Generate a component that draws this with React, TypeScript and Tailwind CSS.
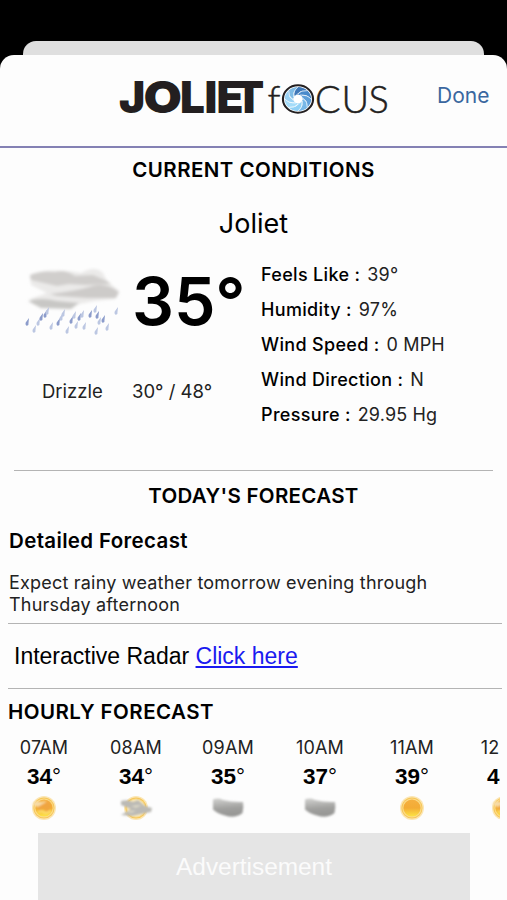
import React from 'react';

const conditions = [
  { label: 'Feels Like :', value: '39°' },
  { label: 'Humidity :', value: '97%' },
  { label: 'Wind Speed :', value: '0 MPH' },
  { label: 'Wind Direction :', value: 'N' },
  { label: 'Pressure :', value: '29.95 Hg' },
];

const hours = [
  { time: '07AM', temp: '34', icon: 'hazy' },
  { time: '08AM', temp: '34', icon: 'partly' },
  { time: '09AM', temp: '35', icon: 'cloudy' },
  { time: '10AM', temp: '37', icon: 'cloudy' },
  { time: '11AM', temp: '39', icon: 'sunny' },
  { time: '12PM', temp: '42', icon: 'hazy' },
];

// shutter blades, clockwise from the top
const blades = ['#3f78b8', '#4a8acb', '#5f9fd9', '#78b8e8', '#8fd0f5', '#a4dcf9', '#9ad2f4', '#7fbce6'];

function Logo() {
  return (
    <svg width="274" height="68" viewBox="0 -12 274 68" fill="#231f20">
      <g fontSize="44" fontWeight="900" fontFamily="Inter, sans-serif">
        <text x="1" y="36.5">J</text>
        <text x="25.5" y="36.5" textLength="38.5" lengthAdjust="spacingAndGlyphs">O</text>
        <text x="62 86.5 98.5 116" y="36.5">LIET</text>
      </g>
      <g fontFamily="Lato, sans-serif" fontWeight="300" stroke="#231f20" strokeWidth="0.5">
        <text x="149.5" y="36.5" fontSize="38">f</text>
        <text x="197 223.5 250.5" y="36.5" fontSize="38">CUS</text>
      </g>
      <g transform="translate(180 23) scale(1.1 1)">
        <circle r="13.7" fill="#fff" stroke="#231f20" strokeWidth="1.9" />
        {blades.map((color, i) => (
          <path key={color} d="M0 -4.2 Q2 -9 8.2 -8.8 A12 12 0 0 1 12 0 Q7 -6 3 -3 Z" fill={color} transform={`rotate(${i * 45 - 45})`} />
        ))}
        {blades.map((color, i) => (
          <path key={color} d="M-1.5 -4.2 Q3 -9 8.6 -8.4" fill="none" stroke="#fff" strokeWidth="0.6" transform={`rotate(${i * 45 - 45})`} />
        ))}
        <circle r="4.2" fill="#fff" />
      </g>
    </svg>
  );
}

function DrizzleIcon() {
  const drops = [[4, 56], [11, 63], [15, 56], [22, 48], [24, 45], [28, 60], [35, 56], [38, 51], [44, 64], [48, 54], [51, 49], [53, 59], [56, 51], [61, 60], [59, 48], [67, 48], [72, 43], [76, 55], [74, 49], [73, 65], [84, 61], [80, 53], [93, 45], [40, 47], [18, 51]];
  return (
    <svg width="102" height="78" viewBox="0 0 102 78">
      <defs>
        <filter id="soft" x="-20%" y="-20%" width="140%" height="140%"><feGaussianBlur stdDeviation="1.5" /></filter>
        <filter id="dropSoft"><feGaussianBlur stdDeviation="0.6" /></filter>
      </defs>
      <g filter="url(#soft)">
        <path d="M7 9 Q22 2 38 4 Q50 4 58 6 Q72 -2 80 6 L84 14 L96 24 L92 32 L72 34 L40 40 L12 38 L7 32 L24 26 L8 18Z" fill="#ebeae9" />
        <path d="M7 8 Q18 3 32 5 Q42 2 52 9 L70 8 L84 14 L88 17 L62 18 L46 17 L34 19 L8 13Z" fill="#d0cecc" />
        <path d="M27 27 Q52 24 66 20 Q82 14 96 25 L93 31 L64 31 L34 29Z" fill="#cdcbc9" />
        <path d="M5 34 Q18 30 34 34 L56 36 L48 42 L18 41Z" fill="#c8c7c5" />
      </g>
      <g filter="url(#dropSoft)">
        {drops.map(([x, y], i) => (
          <path key={i} d="M2 -5 L-1.3 -0.5 Q-2 2.4 0 2.8 Q2 2.6 1.5 0Z" fill={i % 3 === 0 ? '#8c9ccb' : '#bcc7e2'} transform={`translate(${x} ${y})`} />
        ))}
      </g>
    </svg>
  );
}

function HourIcon({ kind }: { kind: string }) {
  return (
    <svg width="36" height="28" viewBox="0 0 36 28">
      <defs>
        <linearGradient id="sun" x1="0" y1="0" x2="0" y2="1">
          <stop offset="0" stopColor="#f5b040" />
          <stop offset="0.5" stopColor="#f3ac35" />
          <stop offset="1" stopColor="#fde445" />
        </linearGradient>
        <linearGradient id="cloud" x1="0" y1="0" x2="0.15" y2="1">
          <stop offset="0" stopColor="#d2d2d0" />
          <stop offset="0.6" stopColor="#a0a09e" />
          <stop offset="1" stopColor="#969694" />
        </linearGradient>
        <filter id="blur" x="-20%" y="-20%" width="140%" height="140%"><feGaussianBlur stdDeviation="0.9" /></filter>
        <filter id="cloudBlur" x="-20%" y="-20%" width="140%" height="140%"><feGaussianBlur stdDeviation="1.2" /></filter>
      </defs>
      {kind !== 'cloudy' && (
        <>
          <circle cx="18" cy="14" r="12" fill="#fbe6b4" />
          <circle cx="18" cy="14" r="10.6" fill="#f7c75a" />
          <circle cx="18" cy="14" r="9.6" fill="#fbdc8c" />
          <circle cx="18" cy="14" r="8.6" fill={kind === 'partly' ? '#fdebbb' : 'url(#sun)'} />
        </>
      )}
      {kind === 'hazy' && (
        <g filter="url(#blur)">
          <path d="M6 10 Q10 6 15 8 L20 7 L18 11 L11 13Z" fill="#f7dca8" />
          <path d="M12 13 Q18 9 22 7 Q26 10 24 15 L20 18 L18 14 L13 17Z" fill="#f0a540" />
          <path d="M12 18 Q16 16 19 19 Q22 19 25 17" stroke="#ffe680" strokeWidth="1.6" fill="none" />
        </g>
      )}
      {kind === 'partly' && (
        <g filter="url(#blur)">
          <path d="M3 7 Q10 5 15 8 L20 6 L27 12 L34 14 L33 18 L23 20 L14 22 L3 21 L8 18 L13 15 L3 11Z" fill="#bbbab5" />
          <path d="M13 12 L24 11 L18 13.5Z M6 18 L18 16.5 L14 18.5Z" fill="#e6e1cc" />
        </g>
      )}
      {kind === 'cloudy' && (
        <path d="M3 5.5 Q8 3.5 13 6 Q22 8.5 33 8 Q34 13 32.5 19 Q25 25 15 21.5 Q8 20 3 15.5Z" fill="url(#cloud)" filter="url(#cloudBlur)" />
      )}
    </svg>
  );
}

export default function App() {
  return (
    <div className="flex h-[900px] w-full flex-col overflow-hidden bg-black font-['Inter',sans-serif] text-black">
      <div className="mx-[23px] mt-[41px] h-[14px] shrink-0 rounded-t-[13px] bg-[#dfdfdf]" />
      <div className="flex flex-1 flex-col overflow-hidden rounded-t-[14px] bg-[#fdfdfd]">
        <header className="flex h-[93px] shrink-0 items-start border-b-2 border-[#8481b4] pl-[118px]">
          <div className="mt-[9px]"><Logo /></div>
          <button className="ml-[45px] mt-[25px] text-[21px] leading-[32px] text-[#3a679f]">Done</button>
        </header>

        <h2 className="mt-[7px] text-center text-[20.5px] leading-[30px] font-semibold tracking-[0.45px]">CURRENT CONDITIONS</h2>
        <h1 className="mt-[21px] text-center text-[27px] leading-[36px]">Joliet</h1>

        <section className="mt-[15px] flex h-[213px] shrink-0">
          <div className="flex w-[261px] flex-col">
            <div className="flex h-[90px] pl-[23px]">
              <div className="mt-[10px] w-[109px]"><DrizzleIcon /></div>
              <span className="mt-[8px] text-[66px] leading-[72px] font-semibold">35°</span>
            </div>
            <div className="mt-[29px] flex pl-[42px] text-[18.5px] leading-[30px] text-[#222]">
              <span className="w-[90px]">Drizzle</span>
              <span>30° / 48°</span>
            </div>
          </div>
          <ul className="text-[18px] leading-[35px]">
            {conditions.map((c) => (
              <li key={c.label} className="flex gap-[7px]">
                <span className="font-medium tracking-[0.33px]">{c.label}</span>
                <span className="tracking-[0.15px] text-[#222]">{c.value}</span>
              </li>
            ))}
          </ul>
        </section>

        <section className="mx-[14px] border-t border-[#b4b4b4]">
          <h2 className="mt-[10px] text-center text-[20.5px] leading-[30px] font-semibold tracking-[0.3px]">TODAY'S FORECAST</h2>
        </section>
        <section className="ml-[8px] mr-[5px] h-[113px] shrink-0 border-b border-[#b4b4b4] pl-[1px]">
          <h3 className="mt-[15px] text-[20.5px] leading-[30px] font-semibold tracking-[0.35px]">Detailed Forecast</h3>
          <p className="mt-[16px] w-[440px] text-[18px] leading-[22px] tracking-[0.2px] text-[#222]">Expect rainy weather tomorrow evening through Thursday afternoon</p>
        </section>
        <section className="ml-[8px] mr-[5px] flex h-[65px] shrink-0 items-center border-b border-[#b4b4b4] pl-[6px] font-['Liberation_Sans',sans-serif] text-[23px]">
          <span>Interactive Radar <a className="text-[#1a1af0] underline decoration-2 underline-offset-2" href="#">Click here</a></span>
        </section>

        <section className="ml-[8px] mr-[7px] shrink-0 overflow-hidden">
          <h2 className="mt-[8px] text-[20.5px] leading-[30px] font-semibold tracking-[0.45px]">HOURLY FORECAST</h2>
          <div className="-ml-[10px] mt-[6px] flex">
            {hours.map((h) => (
              <div key={h.time} className="flex w-[92px] shrink-0 flex-col items-center">
                <span className="text-[18px] leading-[30px] tracking-[0.15px] text-[#222]">{h.time}</span>
                <span className="font-['Liberation_Sans',sans-serif] text-[22.5px] leading-[28px] font-bold">{h.temp}<span className="font-normal">°</span></span>
                <div className="mt-[3px]"><HourIcon kind={h.icon} /></div>
              </div>
            ))}
          </div>
        </section>

        <div className="ml-[38px] mt-[11px] flex h-[67px] w-[432px] shrink-0 items-center justify-center bg-[#e5e5e5] pt-[2px] font-['Liberation_Sans',sans-serif] text-[24.4px] text-[#fbfbfb]">
          Advertisement
        </div>
      </div>
    </div>
  );
}
